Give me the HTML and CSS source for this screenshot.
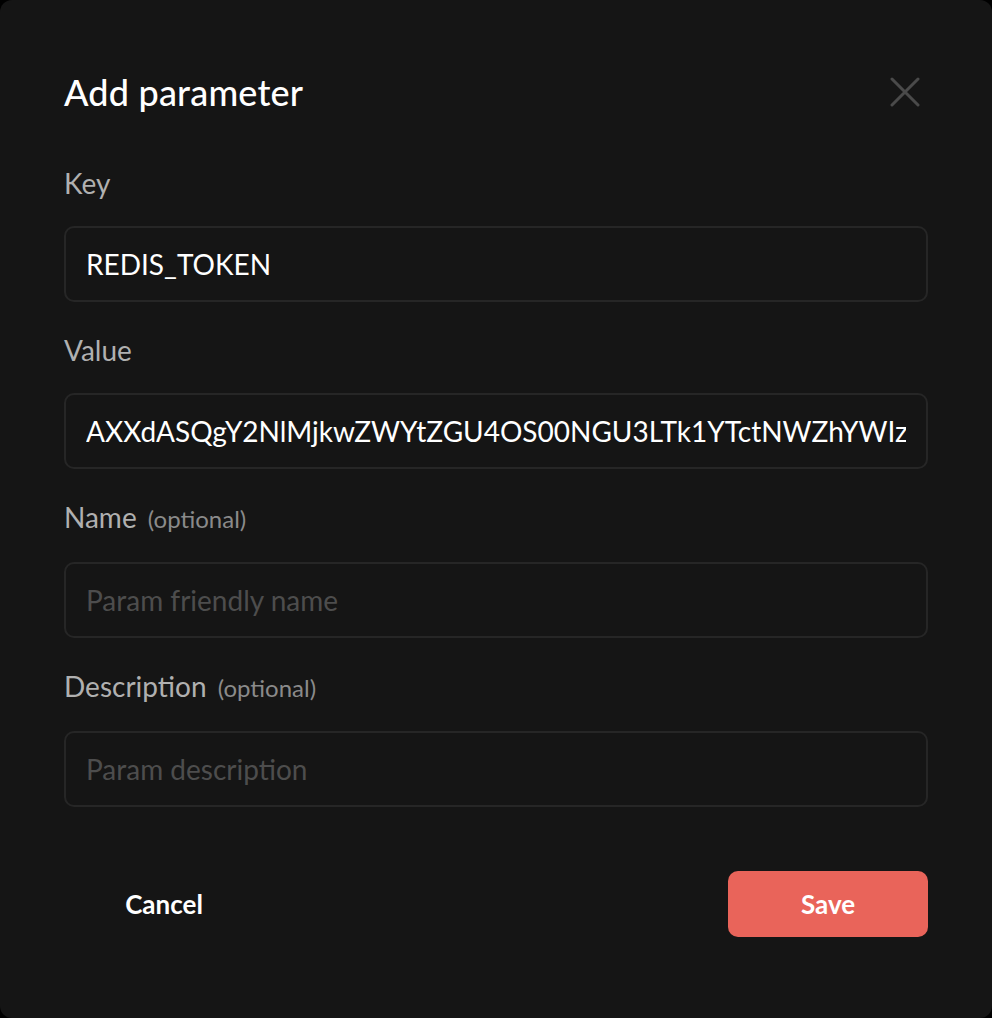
FILE: index.html
```html
<!DOCTYPE html>
<html lang="en">
<head>
  <meta charset="UTF-8" />
  <meta name="viewport" content="width=device-width, initial-scale=1.0"/>
  <title>Add parameter</title>
  <link rel="stylesheet" href="styles.css">
</head>
<body>
  <div class="modal">
    <div class="modal-head">
      <h2>Add parameter</h2>
      <button class="close" aria-label="Close">
        <svg width="30" height="30" viewBox="0 0 30 30">
          <path d="M2 2 L28 28 M28 2 L2 28" stroke="#4a4a4a" stroke-width="3" stroke-linecap="round" fill="none"/>
        </svg>
      </button>
    </div>

    <form class="fields">
      <label class="field">
        <span class="label">Key</span>
        <input type="text" value="REDIS_TOKEN" />
      </label>
      <label class="field">
        <span class="label">Value</span>
        <input type="text" value="AXXdASQgY2NlMjkwZWYtZGU4OS00NGU3LTk1YTctNWZhYWIzNjE3YzQ0ZjM4ZTk0" />
      </label>
      <label class="field">
        <span class="label">Name <em>(optional)</em></span>
        <input type="text" placeholder="Param friendly name" />
      </label>
      <label class="field">
        <span class="label">Description <em>(optional)</em></span>
        <input type="text" placeholder="Param description" />
      </label>
    </form>

    <div class="actions">
      <button class="btn cancel">Cancel</button>
      <button class="btn save">Save</button>
    </div>
  </div>
</body>
</html>
```

FILE: styles.css
```css
* {
  box-sizing: border-box;
}

body {
  margin: 0;
  background-color: #000;
  font-family: Lato, "Noto Sans", sans-serif;
}

.modal {
  width: 992px;
  height: 1018px;
  background-color: #151515;
  border-radius: 12px;
  padding: 64px 64px 0 64px;
  color: #fff;
}

.modal-head {
  display: flex;
  justify-content: space-between;
  align-items: center;
  height: 56px;
}

.modal-head h2 {
  margin: 0;
  font-size: 36px;
  font-weight: 500;
  letter-spacing: 0.2px;
}

.close {
  background: none;
  border: 0;
  padding: 0;
  margin-right: 8px;
  width: 30px;
  height: 30px;
  cursor: pointer;
}

.fields {
  margin-top: 46px;
  display: flex;
  flex-direction: column;
  gap: 31px;
}

.field {
  display: flex;
  flex-direction: column;
  gap: 26px;
}

.label {
  font-size: 28px;
  line-height: 34px;
  color: #b0b0b0;
}

.label em {
  font-style: normal;
  font-size: 24px;
  color: #8a8a8a;
  margin-left: 4px;
}

.field input {
  height: 76px;
  width: 100%;
  background-color: #151515;
  border: 2px solid #262626;
  border-radius: 10px;
  padding: 0 20px;
  font-family: inherit;
  font-size: 28px;
  color: #fff;
  outline: none;
}

.field input::placeholder {
  color: #4d4d4d;
}

.actions {
  margin-top: 64px;
  display: flex;
  justify-content: space-between;
}

.btn {
  width: 200px;
  height: 66px;
  border: 0;
  border-radius: 10px;
  font-family: inherit;
  font-size: 26px;
  font-weight: 700;
  color: #fff;
  cursor: pointer;
}

.cancel {
  background: none;
}

.save {
  background-color: #e9645a;
}
```
